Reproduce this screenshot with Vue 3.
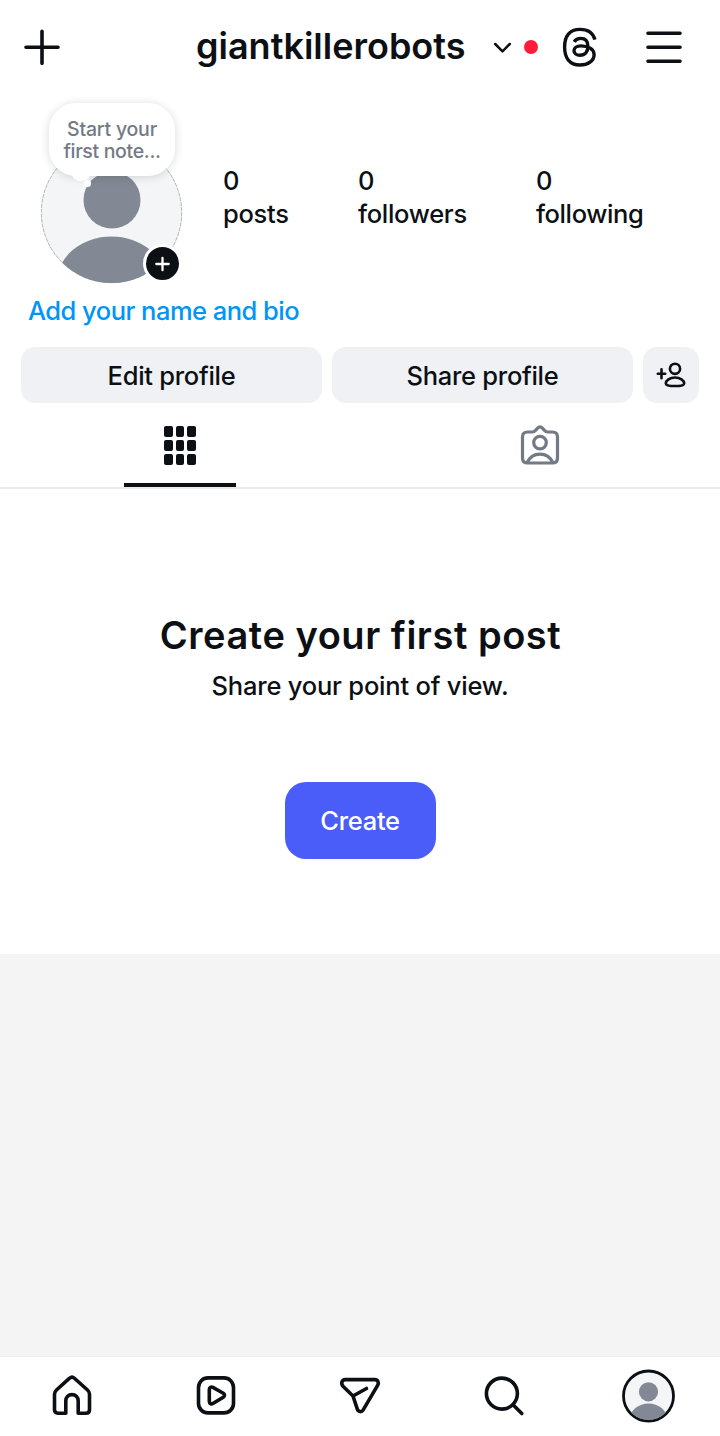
<script setup>
const stats = [
  { key: 'posts', value: 0 },
  { key: 'followers', value: 0 },
  { key: 'following', value: 0 },
]
</script>

<template>
  <div class="screen">
    <header class="topbar">
      <svg class="plus" viewBox="0 0 36 36" fill="none" stroke="currentColor" stroke-width="3.6" stroke-linecap="round">
        <path d="M18 2.300V34.300M2 18.300H34" />
      </svg>
      <div class="account">
        <h1>giantkillerobots</h1>
        <svg class="chevron" viewBox="0 0 20 12" fill="none" stroke="currentColor" stroke-width="2.5" stroke-linecap="round" stroke-linejoin="round">
          <path d="M2.200 2L9.500 9.300L16.800 2" />
        </svg>
        <span class="dot"></span>
      </div>
      <svg class="threads" viewBox="0 0 40 44" fill="none" stroke="currentColor" stroke-width="3.4">
        <path d="M34.900 14.600C33 7.800 28 4.400 20 4.400C9.500 4.400 4.600 11.300 4.600 22.100C4.600 32.900 9.500 40 20 40C28 40 34.100 35.600 34.100 29.700C34.100 24 28.300 20.900 21 20.900C16.500 20.900 14 23 14 25.700C14 28.400 16.500 30.300 20 30.300C25 30.300 27.900 27 27.900 21.300C27.900 16.100 25.500 13.400 20.800 13.400C17.700 13.400 15.600 14.500 14.200 16.800" />
      </svg>
      <svg class="menu" viewBox="0 0 36 34" fill="none" stroke="currentColor" stroke-width="3.6" stroke-linecap="round">
        <path d="M2 3.300H34M2 17.300H34M2 31.300H34" />
      </svg>
    </header>

    <section class="profile">
      <div class="avatar">
        <svg class="face" viewBox="0 0 142 142">
          <clipPath id="profile-clip"><circle cx="70.500" cy="70.500" r="70.500" /></clipPath>
          <g clip-path="url(#profile-clip)">
            <rect width="142" height="142" fill="#f3f5f7" />
            <circle cx="71" cy="58" r="28.500" fill="#838994" />
            <ellipse cx="70.500" cy="140" rx="54.500" ry="45.500" fill="#838994" />
          </g>
          <circle cx="70.500" cy="70.500" r="70.200" fill="none" stroke="#85878a" stroke-width=".6" stroke-dasharray="4 1" />
        </svg>
        <div class="note"><span class="n1">Start your</span><span class="n2">first note...</span></div>
        <span class="badge">
          <svg viewBox="0 0 16 16" stroke="#fff" stroke-width="2.300" stroke-linecap="round"><path d="M7.500 1.800V14.200M1.300 8H13.700" /></svg>
        </span>
      </div>
      <div class="stats">
        <div v-for="s in stats" :key="s.key" :class="['stat', s.key]">
          <span class="num">{{ s.value }}</span>
          <span class="label">{{ s.key }}</span>
        </div>
      </div>
    </section>

    <div class="bio"><a>Add your name and bio</a></div>

    <div class="actions">
      <button class="wide">Edit profile</button>
      <button class="wide">Share profile</button>
      <button class="add">
        <svg viewBox="0 0 30 26" fill="none" stroke="currentColor" stroke-width="2.600" stroke-linecap="round" stroke-linejoin="round">
          <path d="M1.800 11.800H9.200M5.500 7.300V16.300" />
          <circle cx="19" cy="6.800" r="5.100" />
          <path d="M19 15.500C13.800 15.500 9.800 18.500 9.800 21.400C9.800 23.400 13 24 19 24C25 24 28.200 23.400 28.200 21.400C28.200 18.500 24.200 15.500 19 15.500Z" />
        </svg>
      </button>
    </div>

    <nav class="tabs">
      <div class="tab active">
        <div class="grid"><i v-for="n in 9" :key="n"></i></div>
      </div>
      <div class="tab">
        <svg class="tagged" viewBox="0 0 40 42" fill="none" stroke="currentColor" stroke-width="3.200" stroke-linecap="round" stroke-linejoin="round">
          <path d="M7.500 8H12.500C14 8 14.800 7.300 15.600 6.300L17.800 3.900C19 2.500 21 2.500 22.200 3.900L24.400 6.300C25.200 7.300 26 8 27.500 8H32.500C36 8 37.500 10 37.500 13V34C37.500 37.500 35.500 39 32.500 39H7.500C4.500 39 2.500 37.500 2.500 34V13C2.500 10 4 8 7.500 8Z" />
          <circle cx="20" cy="18.600" r="6.300" />
          <path d="M7.500 38.200C9.800 33.200 14.300 30.100 20 30.100C25.700 30.100 30.200 33.200 32.500 38.200" />
        </svg>
      </div>
    </nav>

    <main class="empty">
      <h2>Create your first post</h2>
      <p>Share your point of view.</p>
      <button class="create">Create</button>
    </main>

    <footer class="bottom">
      <div class="item">
        <svg viewBox="0 0 44 44">
          <path d="M19.600 5.200C21 3.900 23 3.900 24.400 5.200L37.500 17C38.800 18.200 39.500 19.500 39.500 21.200V36.500C39.500 39 38.300 40.200 36 40.200H28.200V28C28.200 24 25.500 21.600 22 21.600C18.500 21.600 15.800 24 15.800 28V40.200H8C5.700 40.200 4.500 39 4.500 36.500V21.200C4.500 19.500 5.200 18.200 6.500 17Z" />
        </svg>
      </div>
      <div class="item">
        <svg viewBox="0 0 44 44">
          <rect x="4.500" y="4.900" width="35" height="35" rx="9.500" />
          <path d="M15.300 16.500C15.300 14.300 17.200 13.500 18.900 14.400L29.300 20.200C30.900 21.200 30.900 23.200 29.300 24.200L18.900 30.500C17.200 31.400 15.300 30.500 15.300 28.300Z" />
        </svg>
      </div>
      <div class="item">
        <svg viewBox="0 0 44 44">
          <path d="M7.100 6.600H36.900C39.900 6.600 41.200 9.700 39.600 12.400L25.200 36.900C23.400 39.500 20.100 39 19.300 36.100L15 23L5 13.200C2.600 10.600 4 6.600 7.100 6.600ZM15 23L28.500 15.500" />
        </svg>
      </div>
      <div class="item">
        <svg viewBox="0 0 44 44"><circle cx="19.900" cy="20.600" r="15.500" /><path d="M31 31.700L39.800 40.500" /></svg>
      </div>
      <div class="item">
        <svg class="me" viewBox="0 0 54 54">
          <clipPath id="me-clip"><circle cx="27.500" cy="27" r="24" /></clipPath>
          <circle class="ring" cx="27.500" cy="27" r="25" />
          <g class="person" clip-path="url(#me-clip)">
            <circle cx="27.500" cy="22.800" r="9.600" />
            <ellipse cx="27.500" cy="49.500" rx="18.500" ry="15" />
          </g>
        </svg>
      </div>
    </footer>
  </div>
</template>

<style>
body { background: #fff; }
</style>

<style scoped>
* { box-sizing: border-box; }
.screen {
  width: 720px; height: 1436px; overflow: hidden;
  display: flex; flex-direction: column;
  background: #f4f4f4; color: #0c1014;
  font-family: Inter, "Liberation Sans", sans-serif;
  font-size: 25.500px; font-weight: 500; white-space: nowrap;
}
.screen svg { display: block; flex: none; }
h1, h2, p { margin: 0; }
button { border: 0; padding: 0; font: inherit; color: inherit; display: flex; align-items: center; justify-content: center; }
.topbar { height: 94px; flex: none; background: #fff; display: flex; align-items: center; padding: 0 38px 0 24px; }
.plus { width: 36px; }
.account { display: flex; align-items: center; margin-left: 136px; width: 342px; }
h1 { width: 297px; font-size: 36px; font-weight: 600; line-height: 46px; flex: none; padding-bottom: 2px; }
.chevron { width: 20px; margin-top: 1px; }
.dot { width: 14px; height: 14px; border-radius: 50%; background: #ff1c3b; margin-left: 11px; flex: none; }
.threads { width: 40px; margin-left: 22px; }
.menu { width: 36px; margin-left: auto; }
.profile { height: 198px; flex: none; background: #fff; display: flex; padding-left: 41px; }
.avatar { position: relative; width: 142px; height: 142px; margin-top: 48px; flex: none; }
.face { width: 142px; height: 142px; }
.note {
  position: absolute; left: 8px; top: -39px; width: 126px; height: 73px; border-radius: 27px;
  background: #fff; box-shadow: 0 1px 10px rgba(0, 0, 0, .15); color: #737a85;
  display: flex; flex-direction: column; align-items: center; justify-content: center;
  font-size: 19.500px; line-height: 22px;
}
.n1 { letter-spacing: -.2px; }
.n2 { letter-spacing: -.33px; }
.note::before, .note::after { content: ""; position: absolute; background: #fff; border-radius: 50%; }
.note::before { width: 18px; height: 14px; left: 23px; top: 64px; }
.note::after { width: 7px; height: 7px; left: 35px; top: 77px; }
.badge {
  position: absolute; left: 102px; top: 102px; width: 39px; height: 39px; border-radius: 50%;
  border: 3px solid #fff; background: #0c1014; display: flex; align-items: center; justify-content: center;
}
.badge svg { width: 16px; }
.stats { display: flex; margin: 70px 0 0 40px; line-height: 33px; }
.stat { display: flex; flex-direction: column; letter-spacing: -.3px; }
.stat.posts { width: 135px; }
.stat.followers { width: 178px; }
.stat.following { letter-spacing: -.4px; }
.bio { height: 56px; flex: none; background: #fff; padding-left: 28px; line-height: 38px; color: #0095f6; font-weight: 550; letter-spacing: -.52px; }
.actions { flex: none; background: #fff; display: grid; grid-template-columns: 301px 301px 56px; gap: 10px; padding: 0 21px; height: 55px; }
.actions button { background: #f0f1f5; border-radius: 14px; height: 56px; margin-top: -.6px; letter-spacing: -.28px; }
.add svg { width: 30px; }
.tabs { height: 86px; flex: none; background: #fff; display: flex; border-bottom: 2px solid #e9eaec; }
.tab { flex: 1; display: flex; justify-content: center; position: relative; color: #737a85; }
.tab.active::after { content: ""; position: absolute; bottom: 0; width: 112px; height: 4px; background: #0c1014; }
.grid { display: grid; grid-template-columns: repeat(3, 8.800px); grid-auto-rows: 11px; gap: 3px; margin-top: 23px; height: 39px; }
.grid i { background: #0c1014; border-radius: 2px; }
.tagged { width: 40px; height: 42px; margin-top: 21px; }
.empty { height: 465px; flex: none; background: #fff; display: flex; flex-direction: column; align-items: center; padding-top: 121px; }
h2 { font-size: 38px; line-height: 50px; font-weight: 600; letter-spacing: .53px; padding-left: 1px; }
.empty p { line-height: 34px; margin-top: 9px; letter-spacing: -.2px; }
.create { width: 151px; height: 77px; border-radius: 21px; background: #4a5df9; color: #fff; margin-top: 79px; padding-bottom: 1px; font-weight: 550; letter-spacing: -.3px; }
.bottom { height: 80px; flex: none; margin-top: auto; background: #fff; border-top: 1px solid #e8eeee; display: grid; grid-template-columns: repeat(5, 1fr); }
.item { display: flex; justify-content: center; padding-top: 16px; }
.item svg { width: 44px; height: 44px; fill: none; stroke: #0c1014; stroke-width: 3.600; stroke-linecap: round; stroke-linejoin: round; }
.item svg.me { width: 54px; height: 54px; margin-top: -4px; stroke-width: 2.800; }
.me .ring { fill: #f3f5f7; }
.me .person { fill: #838994; stroke: none; }
</style>
